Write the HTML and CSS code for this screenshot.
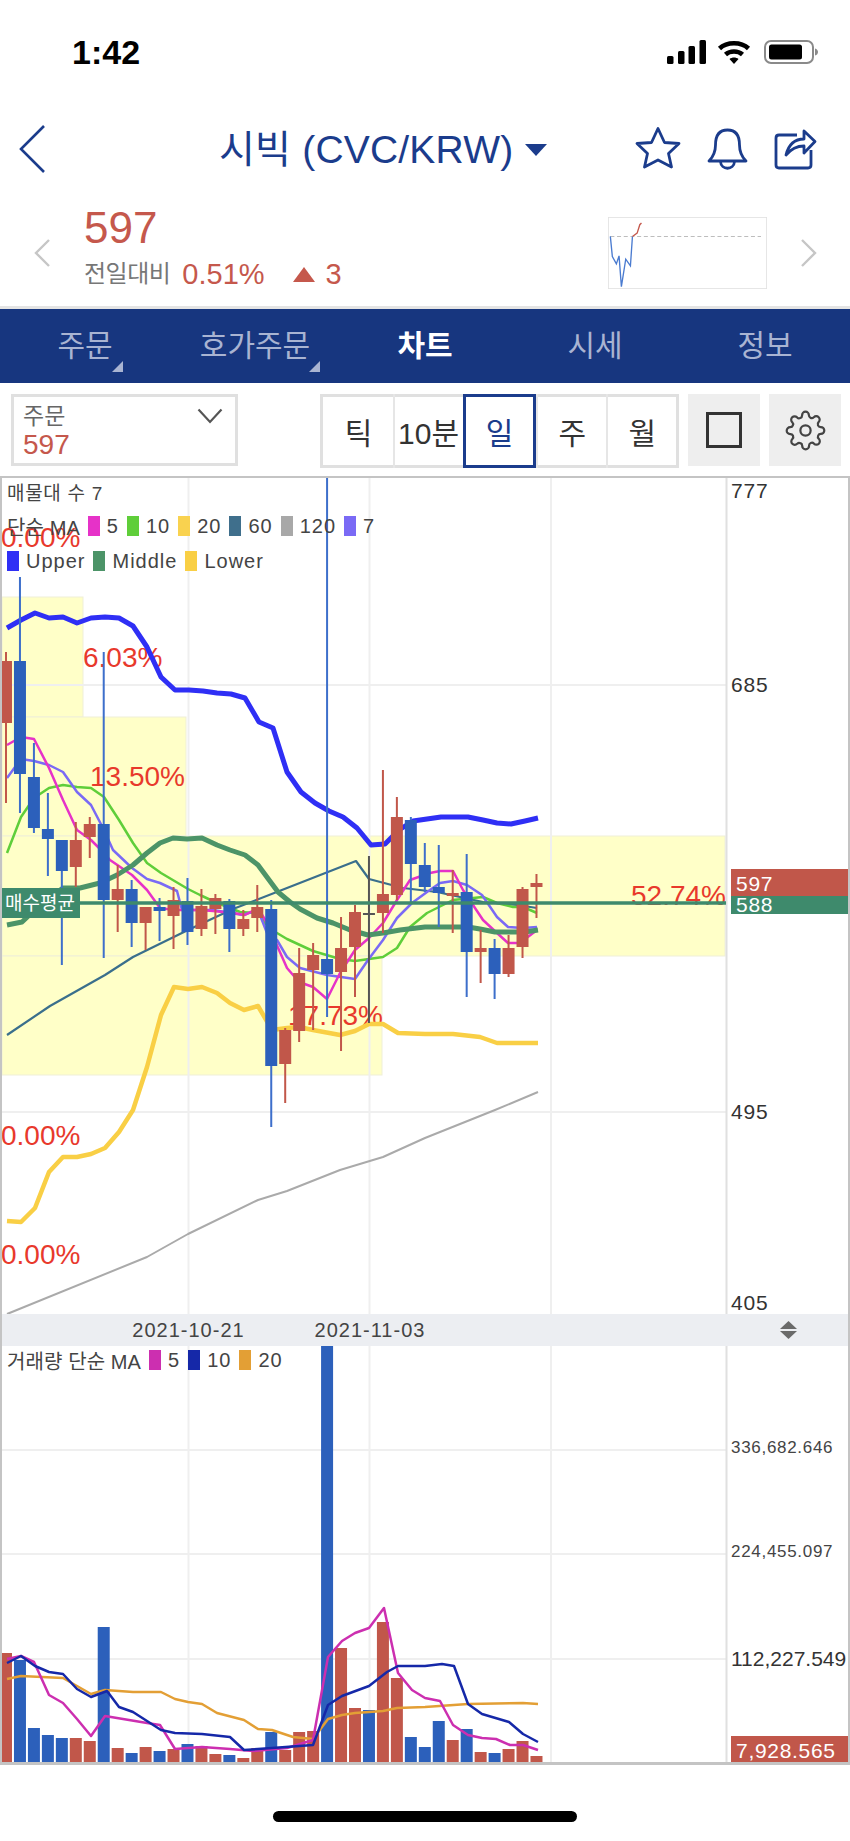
FILE: index.html
```html
<!DOCTYPE html>
<html lang="ko">
<head>
  <meta charset="UTF-8">
  <title>시빅 (CVC/KRW)</title>
  <meta name="viewport" content="width=device-width, initial-scale=1.0">
  <link rel="stylesheet" href="styles.css">
</head>
<body>
  <div class="status-bar">
    <span class="time">1:42</span>
    <div class="status-icons">
      <svg class="ic-signal" viewBox="0 0 39 24">
        <rect x="0" y="16" width="6.5" height="8" rx="1.5"/>
        <rect x="11" y="11" width="6.5" height="13" rx="1.5"/>
        <rect x="21.5" y="6" width="6.5" height="18" rx="1.5"/>
        <rect x="32.5" y="0" width="6.5" height="24" rx="1.5"/>
      </svg>
      <svg class="ic-wifi" viewBox="0 0 34 25">
        <path d="M2.5 9.5C10 2.5 24 2.5 31.5 9.5" fill="none" stroke="#000" stroke-width="4.6"/>
        <path d="M8.5 15.5C13 11.5 21 11.5 25.5 15.5" fill="none" stroke="#000" stroke-width="4.6"/>
        <path d="M12.5 20C15 18 19 18 21.5 20L17 25Z"/>
      </svg>
      <svg class="ic-battery" viewBox="0 0 54 24">
        <rect x="1" y="1" width="48" height="22" rx="6" fill="none" stroke="#8a8a8a" stroke-width="2"/>
        <rect x="5" y="4.5" width="33" height="15" rx="2.5"/>
        <path d="M51 8.5C53 9 54 10.5 54 12S53 15 51 15.5Z" fill="#8a8a8a"/>
      </svg>
    </div>
  </div>

  <header class="nav">
    <svg class="ic-back" viewBox="0 0 26 50"><path d="M25 2 2 25l23 23"/></svg>
    <h1 class="title">시빅 (CVC/KRW)</h1>
    <span class="title-caret"></span>
    <div class="nav-icons">
      <svg class="ic-star" viewBox="634 126 46 44"><path d="M657 128.500 663.500 142.500 678 143.500 667.500 153.500 670.500 167 657 160 643.500 167 646.500 153.500 636 143.500 650.500 142.500Z"/></svg>
      <svg class="ic-bell" viewBox="705 127 43 44"><path d="M708 161C713 156 714.500 152 714.500 145C714.500 135 719 130 726.500 130S738.500 135 738.500 145C738.500 152 740 156 745 161Z"/><path d="M719.500 161.500C720 170.500 733 170.500 733.500 161.500"/></svg>
      <svg class="ic-share" viewBox="772 128 45 42"><path d="M796 135H778C776 135 775 136 775 138V165C775 167 776 168 778 168H807C809 168 810 167 810 165V150"/><path d="M785 155C788 143 795 139 803 139V131L814 141.500 803 153V146C796 146 790 149 785 155Z"/></svg>
    </div>
  </header>

  <section class="quote">
    <svg class="ic-chev" viewBox="0 0 17 30"><path d="M15 2 2 15l13 13"/></svg>
    <div class="quote-text">
      <div class="price">597</div>
      <div class="change">
        <span class="change-label">전일대비</span>
        <span class="up">0.51%</span>
        <span class="up-arrow"></span>
        <span class="up">3</span>
      </div>
    </div>
    <svg class="mini-chart" viewBox="55 322 475 215">
      <rect x="56" y="323" width="473" height="213" fill="#fff" stroke="#e2e2e2" stroke-width="3"/>
      <line x1="62" y1="380" x2="512" y2="380" stroke="#bdbdbd" stroke-width="3" stroke-dasharray="12 8"/>
      <polyline points="62,380 68,440 80,462 88,438 95,530 108,448 122,468 128,380" fill="none" stroke="#4a7bd0" stroke-width="4"/>
      <polyline points="128,380 142,370 150,345 155,340" fill="none" stroke="#c5584c" stroke-width="4"/>
    </svg>
    <svg class="ic-chev" viewBox="0 0 17 30"><path d="M2 2l13 13L2 28"/></svg>
  </section>

  <nav class="tabs">
    <span class="tab has-menu">주문</span>
    <span class="tab has-menu">호가주문</span>
    <span class="tab active">차트</span>
    <span class="tab">시세</span>
    <span class="tab">정보</span>
  </nav>

  <div class="toolbar">
    <div class="order-select">
      <div class="order-label">주문</div>
      <div class="order-price">597</div>
      <svg class="ic-down" viewBox="0 0 26 16"><path d="M1.500 1.500 13 14 24.500 1.500"/></svg>
    </div>
    <div class="periods">
      <span class="period">틱</span>
      <span class="period">10분</span>
      <span class="period active">일</span>
      <span class="period">주</span>
      <span class="period">월</span>
    </div>
    <button class="tool-btn"><span class="square-icon"></span></button>
    <button class="tool-btn">
      <svg class="ic-gear" viewBox="0 0 24 24">
        <circle cx="12" cy="12" r="3"/>
        <path d="M19.4 15a1.65 1.65 0 0 0 .33 1.82l.06.06a2 2 0 0 1 0 2.83 2 2 0 0 1-2.83 0l-.06-.06a1.65 1.65 0 0 0-1.82-.33 1.65 1.65 0 0 0-1 1.51V21a2 2 0 0 1-2 2 2 2 0 0 1-2-2v-.09A1.65 1.65 0 0 0 9 19.4a1.65 1.65 0 0 0-1.82.33l-.06.06a2 2 0 0 1-2.83 0 2 2 0 0 1 0-2.83l.06-.06a1.65 1.65 0 0 0 .33-1.82 1.65 1.65 0 0 0-1.51-1H3a2 2 0 0 1-2-2 2 2 0 0 1 2-2h.09A1.65 1.65 0 0 0 4.6 9a1.65 1.65 0 0 0-.33-1.82l-.06-.06a2 2 0 0 1 0-2.83 2 2 0 0 1 2.83 0l.06.06a1.65 1.65 0 0 0 1.82.33H9a1.65 1.65 0 0 0 1-1.51V3a2 2 0 0 1 2-2 2 2 0 0 1 2 2v.09a1.65 1.65 0 0 0 1 1.51 1.65 1.65 0 0 0 1.82-.33l.06-.06a2 2 0 0 1 2.83 0 2 2 0 0 1 0 2.83l-.06.06a1.65 1.65 0 0 0-.33 1.82V9a1.65 1.65 0 0 0 1.51 1H21a2 2 0 0 1 2 2 2 2 0 0 1-2 2h-.09a1.65 1.65 0 0 0-1.51 1z"/>
      </svg>
    </button>
  </div>

  <section class="chart">
    <svg class="chart-svg" viewBox="2 478 846 1284">
      <!-- volume profile zones -->
      <g class="zones">
        <rect x="2" y="597" width="81" height="120"/>
        <rect x="2" y="717" width="184" height="119"/>
        <rect x="2" y="836" width="723" height="120"/>
        <rect x="2" y="956" width="380" height="119"/>
      </g>
      <g class="grid">
        <line x1="2" y1="685" x2="726" y2="685"/>
        <line x1="2" y1="1112" x2="726" y2="1112"/>
        <line x1="188.500" y1="478" x2="188.500" y2="1314"/>
        <line x1="369.500" y1="478" x2="369.500" y2="1314"/>
        <line x1="551" y1="478" x2="551" y2="1314"/>
        <line x1="2" y1="1450" x2="726" y2="1450"/>
        <line x1="2" y1="1554" x2="726" y2="1554"/>
        <line x1="2" y1="1659" x2="726" y2="1659"/>
        <line x1="188.500" y1="1346" x2="188.500" y2="1762"/>
        <line x1="369.500" y1="1346" x2="369.500" y2="1762"/>
        <line x1="551" y1="1346" x2="551" y2="1762"/>
      </g>
      <line class="axis-sep" x1="726.500" y1="478" x2="726.500" y2="1762"/>

      <g class="zone-labels">
        <text x="1" y="547">0.00%</text>
        <text x="83" y="667">6.03%</text>
        <text x="90" y="786">13.50%</text>
        <text x="631" y="905">52.74%</text>
        <text x="288" y="1025">17.73%</text>
        <text x="1" y="1145">0.00%</text>
        <text x="1" y="1264">0.00%</text>
      </g>

      <g id="priceLines"></g>
      <g id="priceCandles"></g>

      <line class="avg-line" x1="80" y1="903" x2="726" y2="903"/>
      <rect class="avg-tag" x="2" y="888" width="78" height="30"/>
      <text class="tag-text avg-text" x="5" y="910">매수평균</text>

      <g class="axis-labels">
        <text x="731" y="498">777</text>
        <text x="731" y="692">685</text>
        <text x="731" y="1119">495</text>
        <text x="731" y="1310">405</text>
      </g>
      <rect class="tag-red" x="731" y="869" width="118" height="27"/>
      <rect class="tag-green" x="731" y="896" width="118" height="18"/>
      <text class="tag-text" x="736" y="891">597</text>
      <text class="tag-text" x="736" y="912">588</text>

      <rect class="date-strip" x="2" y="1314" width="846" height="32"/>
      <text class="date-label" x="188.500" y="1337">2021-10-21</text>
      <text class="date-label" x="370" y="1337">2021-11-03</text>
      <path class="resize-arrows" d="M780 1329 788.500 1321 797 1329ZM780 1331 788.500 1339 797 1331Z"/>

      <g id="volumeBars"></g>
      <g id="volumeLines"></g>

      <g class="axis-small">
        <text x="731" y="1453">336,682.646</text>
        <text x="731" y="1557">224,455.097</text>
      </g>
      <text class="axis-mid" x="731" y="1666">112,227.549</text>
      <rect class="tag-red" x="731" y="1736" width="118" height="26"/>
      <text class="tag-text" x="736" y="1758">7,928.565</text>
    </svg>

    <div class="legend legend-price">
      <div class="legend-row legend-title">매물대 수 7</div>
      <div class="legend-row"><span class="legend-name">단순 MA</span><i class="swatch c-ma5"></i>5<i class="swatch c-ma10"></i>10<i class="swatch c-ma20"></i>20<i class="swatch c-ma60"></i>60<i class="swatch c-ma120"></i>120<i class="swatch c-ma7"></i>7</div>
      <div class="legend-row"><i class="swatch first c-upper"></i>Upper<i class="swatch c-middle"></i>Middle<i class="swatch c-lower"></i>Lower</div>
    </div>
    <div class="legend legend-volume">
      <div class="legend-row"><span class="legend-name">거래량 단순 MA</span><i class="swatch c-vol5"></i>5<i class="swatch c-vol10"></i>10<i class="swatch c-vol20"></i>20</div>
    </div>
  </section>

  <footer class="home-area"><div class="home-bar"></div></footer>

  <script src="chart.js"></script>
</body>
</html>
```

FILE: styles.css
```css
* { margin: 0; padding: 0; box-sizing: border-box; }
body {
  width: 850px;
  height: 1841px;
  background: #fff;
  font-family: "Liberation Sans", "Noto Sans CJK KR", sans-serif;
  color: #333;
  overflow: hidden;
}

/* status bar */
.status-bar {
  height: 100px;
  padding: 37px 32px 0 72px;
  display: flex;
  justify-content: space-between;
  align-items: flex-start;
}
.time { font-size: 34px; font-weight: bold; line-height: 30px; color: #000; }
.status-icons { display: flex; gap: 11px; padding-top: 3px; }
.ic-signal { width: 39px; height: 24px; }
.ic-wifi { width: 34px; height: 25px; margin-top: -1px; }
.ic-battery { width: 54px; height: 24px; margin-left: 2px; }

/* nav */
.nav {
  height: 100px;
  padding: 24px 0 0 19px;
  display: flex;
  align-items: flex-start;
}
.ic-back { width: 26px; height: 50px; flex: none; }
.ic-back path { fill: none; stroke: #1b3c8c; stroke-width: 2.6; }
.title {
  margin-left: 174px;
  font-size: 39px;
  font-weight: normal;
  line-height: 52px;
  letter-spacing: .2px;
  color: #1b3c8c;
  white-space: nowrap;
}
.title-caret {
  width: 0;
  height: 0;
  margin: 20px 0 0 12px;
  border-left: 11px solid transparent;
  border-right: 11px solid transparent;
  border-top: 12px solid #1b3c8c;
}
.nav-icons { margin-left: 88px; display: flex; }
.nav-icons svg { fill: none; stroke: #1b3c8c; stroke-width: 2.8; stroke-linejoin: round; }
.ic-star { width: 46px; height: 44px; margin-top: 2px; }
.ic-bell { width: 43px; height: 44px; margin: 3px 0 0 25px; }
.ic-share { width: 45px; height: 42px; margin: 4px 0 0 24px; }

/* quote row */
.quote {
  height: 106px;
  padding: 0 33px 0 34px;
  display: flex;
  align-items: flex-start;
}
.ic-chev { width: 17px; height: 30px; margin-top: 38px; flex: none; }
.ic-chev path { fill: none; stroke: #c6c6c6; stroke-width: 2.4; }
.quote-text { width: 559px; padding: 3px 0 0 33px; }
.price { font-size: 44px; line-height: 50px; color: #c5584c; }
.change { margin-top: 4px; display: flex; align-items: center; font-size: 29px; line-height: 34px; color: #c5584c; }
.change-label { color: #777; font-size: 24px; letter-spacing: -.5px; margin-right: 12px; }
.up-arrow {
  width: 0;
  height: 0;
  margin: 0 11px 0 28px;
  border-left: 11.5px solid transparent;
  border-right: 11.5px solid transparent;
  border-bottom: 15px solid #c5584c;
}
.mini-chart { width: 159px; height: 72px; margin-top: 17px; margin-right: 33px; flex: none; }

/* tabs */
.tabs {
  height: 77px;
  border-top: 3px solid #e4e4e4;
  background: #17367f;
  display: grid;
  grid-template-columns: repeat(5, 1fr);
  align-items: center;
}
.tab {
  position: relative;
  justify-self: center;
  font-size: 30px;
  line-height: 40px;
  color: #a9b4d2;
}
.tab.active { color: #fff; font-weight: bold; }
.tab.has-menu::after {
  content: "";
  position: absolute;
  right: -10px;
  bottom: -6px;
  border-left: 11px solid transparent;
  border-bottom: 11px solid #a9b4d2;
}

/* toolbar */
.toolbar {
  height: 93px;
  padding: 11px 9px 0 11px;
  display: flex;
  align-items: flex-start;
}
.order-select {
  position: relative;
  width: 227px;
  height: 72px;
  padding: 5px 9px;
  border: 3px solid #e0e0e0;
}
.order-label { font-size: 23px; line-height: 28px; color: #666; }
.order-price { font-size: 28px; line-height: 30px; color: #c5584c; }
.ic-down { position: absolute; top: 11px; right: 12px; width: 26px; height: 16px; }
.ic-down path { fill: none; stroke: #555; stroke-width: 2.2; }
.periods {
  width: 360px;
  height: 74px;
  margin-left: 82px;
  border: 3px solid #e0e0e0;
  display: flex;
  font-size: 30px;
}
.period {
  flex: 1;
  display: flex;
  align-items: center;
  justify-content: center;
  border-left: 2px solid #e6e6e6;
  margin-top: -3px;
  margin-bottom: -3px;
  white-space: nowrap;
}
.period:first-child { border-left-color: transparent; }
.period.active { border: 3px solid #1b3c8c; color: #1b3c8c; }
.tool-btn {
  width: 72px;
  height: 72px;
  margin-left: 9px;
  border: none;
  background: #eee;
  display: flex;
  align-items: center;
  justify-content: center;
}
.square-icon { width: 36px; height: 36px; border: 3px solid #333; }
.ic-gear { width: 41px; height: 41px; fill: none; stroke: #444; stroke-width: 1.3; }

/* chart */
.chart {
  position: relative;
  height: 1289px;
  border-style: solid;
  border-color: #c4c4c4;
  border-width: 2px 2px 3px 2px;
}
.chart-svg { display: block; width: 846px; height: 1284px; }
.chart-svg text { font-family: "Liberation Sans", "Noto Sans CJK KR", sans-serif; }
.zones rect { fill: #ffffc8; stroke: #efefd8; stroke-width: 1; }
.grid line { stroke: #efefef; stroke-width: 2; }
.axis-sep { stroke: #e0e0e0; stroke-width: 2; }
.zone-labels text { font-size: 28px; fill: #e8392c; }
.avg-line { stroke: #3e8a6c; stroke-width: 3.5; }
.avg-tag, .tag-green { fill: #3e8a6c; }
.tag-red { fill: #c1574a; }
.tag-text { font-size: 21px; fill: #fff; letter-spacing: .7px; }
.avg-text { font-size: 19px; letter-spacing: 0; }
.axis-labels text { font-size: 21px; fill: #333; letter-spacing: .8px; }
.axis-small text { font-size: 17px; fill: #444; letter-spacing: .7px; }
.axis-mid { font-size: 21px; fill: #333; }
.date-strip { fill: #eceef2; }
.date-label { font-size: 20px; fill: #444; letter-spacing: 1px; text-anchor: middle; }
.resize-arrows { fill: #6a6a6a; }

/* legends over the chart */
.legend { position: absolute; left: 5px; font-size: 20px; color: #444; letter-spacing: 1px; }
.legend-price { top: 0; display: flex; flex-direction: column; gap: 9px; }
.legend-volume { top: 869px; }
.legend-row { height: 26px; display: flex; align-items: center; white-space: nowrap; }
.legend-title { font-size: 19px; letter-spacing: .7px; }
.legend-name { letter-spacing: .1px; }
.swatch { width: 12px; height: 20px; margin: 0 7px 0 8px; flex: none; }
.swatch.first { margin-left: 0; }
.c-ma5 { background: #e632c8; }
.c-ma10 { background: #5fce3a; }
.c-ma20 { background: #f9d24f; }
.c-ma60 { background: #3f6f8c; }
.c-ma120 { background: #a8a8a8; }
.c-ma7 { background: #7a6af5; }
.c-upper { background: #2f2ff5; }
.c-middle { background: #4c9468; }
.c-lower { background: #f9cf45; }
.c-vol5 { background: #cc2fb0; }
.c-vol10 { background: #1528a8; }
.c-vol20 { background: #e39f35; }

/* home indicator */
.home-area { height: 76px; padding-top: 46px; }
.home-bar { width: 304px; height: 11px; margin: 0 auto; border-radius: 6px; background: #000; }
```

FILE: chart.js
```js
const NS = 'http://www.w3.org/2000/svg';
const RED = '#c1574a';
const BLUE = '#2c60bb';
const WICK_BLUE = '#3d6fcb';

function add(parent, tag, attrs) {
  const el = document.createElementNS(NS, tag);
  for (const k in attrs) el.setAttribute(k, attrs[k]);
  parent.appendChild(el);
}

function drawLine(parent, color, width, pts) {
  add(parent, 'polyline', {
    points: pts.map(p => p.join(',')).join(' '),
    fill: 'none',
    stroke: color,
    'stroke-width': width,
    'stroke-linejoin': 'round'
  });
}

function barX(i) { return 6 + 13.96 * i; }

// type, wick top, wick bottom, body top, body bottom
const candles = [
  ['r', 652, 803, 661, 723], ['b', 577, 813, 661, 774], ['b', 743, 833, 777, 828],
  ['b', 793, 876, 829, 839], ['b', 840, 965, 840, 871], ['r', 822, 887, 840, 867],
  ['r', 817, 858, 824, 837], ['b', 652, 958, 824, 900], ['r', 865, 932, 889, 900],
  ['b', 880, 947, 889, 923], ['r', 907, 950, 907, 923], ['b', 898, 941, 907, 911],
  ['r', 887, 949, 900, 916], ['b', 878, 945, 901, 932], ['r', 889, 936, 906, 929],
  ['r', 894, 934, 898, 909], ['b', 899, 952, 901, 929], ['r', 910, 936, 919, 929],
  ['r', 885, 932, 907, 918], ['b', 900, 1127, 909, 1066], ['r', 1028, 1103, 1030, 1064],
  ['r', 948, 1042, 973, 1031], ['r', 943, 1030, 955, 970], ['b', 478, 1017, 959, 974],
  ['r', 917, 1051, 948, 972], ['r', 905, 997, 912, 947], ['d', 856, 1023, 913, 915],
  ['r', 770, 933, 894, 913], ['r', 797, 900, 817, 895], ['b', 817, 902, 820, 864],
  ['b', 843, 892, 865, 887], ['b', 845, 927, 887, 893], ['r', 870, 933, 893, 896],
  ['b', 854, 997, 892, 952], ['r', 930, 983, 948, 952], ['b', 939, 999, 948, 974],
  ['r', 935, 977, 948, 974], ['r', 887, 958, 889, 947], ['r', 874, 918, 883, 887]
];

const priceLines = [
  ['#aaaaaa', 2, [[7,1314],[147,1257],[188,1234],[258,1200],[287,1191],[340,1170],[383,1157],[425,1138],[495,1110],[538,1092]]],
  ['#3a6f8c', 2.2, [[7,1035],[50,1006],[105,975],[133,957],[188,930],[233,909],[287,888],[356,861],[369,879],[403,888],[437,892],[460,897],[483,902],[517,905],[537,908]]],
  ['#5fce3a', 2.5, [[7,853],[21,817],[34,798],[49,788],[63,785],[77,787],[91,788],[104,797],[119,820],[133,843],[147,863],[161,873],[188,889],[200,895],[215,902],[240,912],[258,913],[265,923],[272,930],[287,939],[313,951],[340,959],[355,961],[383,957],[397,948],[410,927],[427,913],[453,900],[483,897],[497,903],[513,907],[523,907],[537,913]]],
  ['#7a6af5', 2.5, [[7,778],[21,759],[34,761],[49,765],[63,772],[77,792],[91,805],[104,830],[113,850],[132,868],[147,879],[160,883],[177,891],[182,910],[213,910],[243,915],[258,910],[267,933],[277,940],[287,957],[300,968],[327,975],[355,979],[368,960],[383,940],[397,918],[412,903],[427,892],[440,883],[453,881],[467,885],[482,895],[497,917],[508,927],[523,928],[537,927]]],
  ['#e632c8', 2.5, [[7,745],[21,737],[34,739],[49,768],[63,800],[77,830],[91,840],[104,853],[110,860],[132,875],[147,890],[160,908],[174,910],[200,910],[213,911],[233,913],[245,915],[258,908],[267,923],[287,968],[299,982],[313,987],[327,999],[340,973],[355,950],[369,938],[383,923],[397,900],[410,880],[430,873],[440,871],[453,871],[463,890],[483,920],[497,933],[508,943],[520,943],[537,930]]],
  ['#f9cf45', 4.5, [[7,1221],[21,1222],[35,1208],[49,1172],[63,1157],[77,1157],[91,1154],[105,1148],[119,1132],[133,1110],[147,1067],[161,1015],[174,987],[188,989],[202,987],[217,993],[230,1003],[244,1010],[258,1006],[272,1030],[287,1028],[299,1027],[313,1030],[340,1035],[355,1031],[369,1024],[383,1024],[398,1033],[425,1034],[453,1034],[480,1037],[497,1043],[538,1043]]],
  ['#4c9468', 5, [[7,925],[22,922],[40,905],[63,888],[80,888],[100,883],[117,875],[133,865],[147,853],[160,843],[173,838],[187,839],[202,838],[217,845],[230,850],[245,855],[258,865],[278,892],[290,902],[300,909],[317,918],[333,923],[350,930],[368,935],[383,933],[400,930],[425,927],[452,927],[468,927],[480,929],[495,932],[508,932],[525,932],[538,930]]],
  ['#2f2ff5', 5, [[7,628],[21,620],[35,613],[49,618],[63,617],[77,623],[91,618],[105,617],[119,618],[133,626],[147,647],[161,677],[175,690],[189,690],[203,691],[217,693],[231,694],[245,698],[259,722],[273,728],[287,772],[301,792],[315,803],[329,811],[343,817],[357,828],[371,845],[385,844],[399,830],[413,821],[427,819],[441,817],[468,817],[483,820],[497,823],[511,824],[525,821],[538,818]]]
];

// red or blue, top of the bar
const volumes = [
  ['r',1653],['b',1660],['b',1728],['b',1735],['b',1738],['r',1738],['r',1741],['b',1627],
  ['r',1748],['b',1753],['r',1747],['b',1751],['r',1749],['b',1744],['r',1746],['r',1754],
  ['b',1755],['r',1758],['r',1748],['b',1732],['r',1750],['r',1732],['r',1731],['b',1346],
  ['r',1648],['r',1708],['b',1710],['r',1622],['r',1678],['b',1737],['b',1747],['b',1721],
  ['r',1740],['b',1729],['r',1752],['b',1753],['r',1749],['r',1741],['r',1756]
];

const volumeLines = [
  ['#e39f35', 2.5, [[7,1679],[21,1676],[63,1678],[91,1694],[105,1690],[133,1692],[161,1692],[175,1699],[188,1702],[202,1704],[217,1713],[244,1720],[258,1729],[272,1730],[293,1737],[313,1739],[328,1719],[342,1715],[355,1713],[383,1711],[397,1708],[425,1707],[468,1704],[523,1703],[538,1704]]],
  ['#cc2fb0', 2.5, [[7,1659],[21,1656],[34,1662],[49,1695],[63,1703],[77,1719],[91,1736],[105,1716],[147,1723],[160,1725],[175,1749],[202,1747],[230,1749],[253,1751],[287,1748],[313,1740],[328,1657],[342,1641],[355,1633],[369,1628],[384,1608],[398,1673],[412,1690],[425,1698],[440,1701],[453,1725],[468,1735],[482,1738],[496,1739],[510,1745],[523,1745],[538,1750]]],
  ['#1528a8', 2.5, [[7,1663],[21,1656],[35,1666],[49,1672],[63,1674],[77,1689],[91,1697],[107,1691],[119,1707],[133,1712],[161,1730],[175,1733],[202,1734],[230,1737],[244,1750],[272,1748],[313,1745],[328,1705],[342,1696],[369,1686],[387,1672],[398,1666],[425,1666],[442,1664],[454,1666],[468,1704],[482,1714],[509,1722],[523,1734],[538,1742]]]
];

const priceLineGroup = document.getElementById('priceLines');
priceLines.forEach(l => drawLine(priceLineGroup, l[0], l[1], l[2]));

const candleGroup = document.getElementById('priceCandles');
candles.forEach((c, i) => {
  const x = barX(i);
  const body = c[0] === 'r' ? RED : c[0] === 'b' ? BLUE : '#555';
  const wick = c[0] === 'b' ? WICK_BLUE : body;
  add(candleGroup, 'rect', { x: x - 1, y: c[1], width: 2, height: c[2] - c[1], fill: wick });
  add(candleGroup, 'rect', { x: x - 6, y: c[3], width: 12, height: c[4] - c[3], fill: body });
});

const barGroup = document.getElementById('volumeBars');
volumes.forEach((v, i) => {
  add(barGroup, 'rect', {
    x: barX(i) - 6,
    y: v[1],
    width: 12,
    height: 1762 - v[1],
    fill: v[0] === 'r' ? RED : BLUE
  });
});

const volumeLineGroup = document.getElementById('volumeLines');
volumeLines.forEach(l => drawLine(volumeLineGroup, l[0], l[1], l[2]));
```
